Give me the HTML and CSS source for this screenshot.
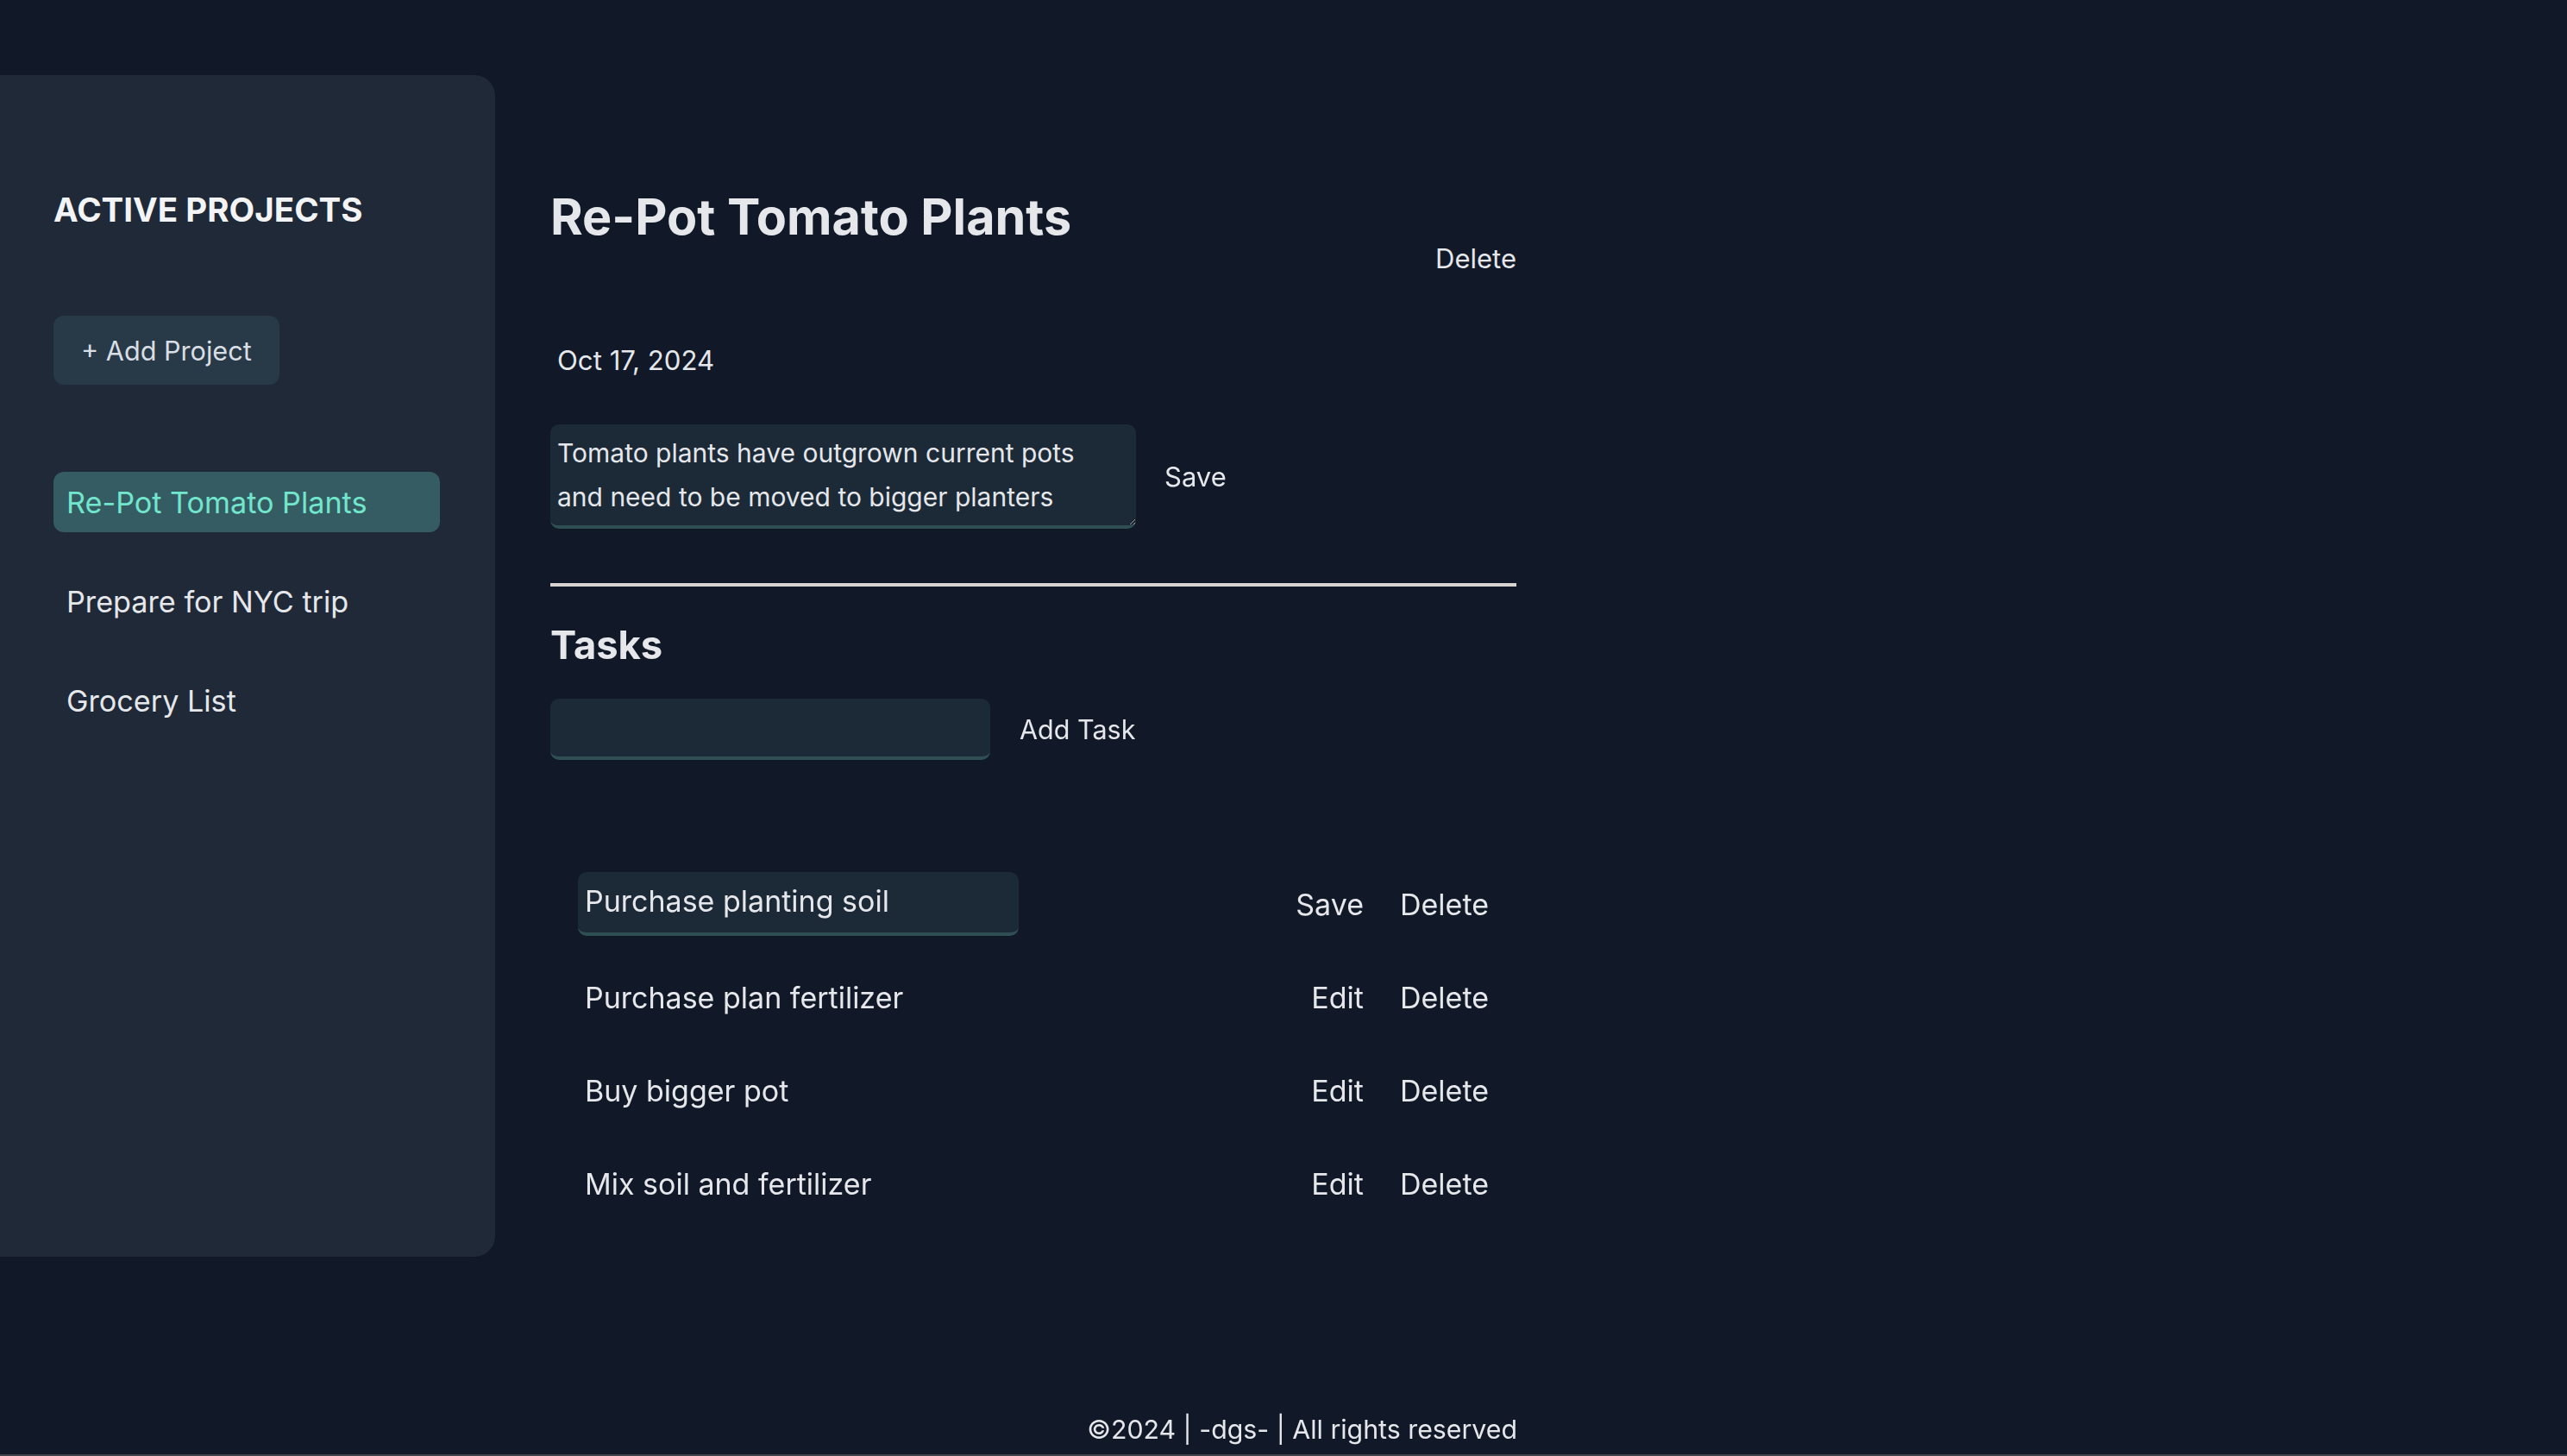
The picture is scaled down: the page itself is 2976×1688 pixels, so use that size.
FILE: index.html
```html
<!DOCTYPE html>
<html lang="en">
<head>
<meta charset="utf-8">
<title>Project Manager</title>
<link rel="stylesheet" href="styles.css">
</head>
<body>
<div class="app">
  <main class="layout">
    <aside class="sidebar">
      <h2 class="sidebar-title">ACTIVE PROJECTS</h2>
      <button class="add-project">+ Add Project</button>
      <ul class="project-list">
        <li><button class="project-item active">Re-Pot Tomato Plants</button></li>
        <li><button class="project-item">Prepare for NYC trip</button></li>
        <li><button class="project-item">Grocery List</button></li>
      </ul>
    </aside>
    <section class="project">
      <header class="project-header">
        <div class="title-row">
          <h1 class="project-title">Re-Pot Tomato Plants</h1>
          <button class="text-btn delete-project">Delete</button>
        </div>
        <p class="project-date">Oct 17, 2024</p>
        <div class="desc-row">
          <textarea class="desc-input">Tomato plants have outgrown current pots and need to be moved to bigger planters</textarea>
          <button class="text-btn">Save</button>
        </div>
      </header>
      <h2 class="tasks-title">Tasks</h2>
      <div class="new-task">
        <input class="task-input" type="text">
        <button class="text-btn">Add Task</button>
      </div>
      <ul class="task-list">
        <li class="task">
          <input class="task-edit" type="text" value="Purchase planting soil">
          <div class="task-actions"><button class="task-btn">Save</button><button class="task-btn">Delete</button></div>
        </li>
        <li class="task">
          <span class="task-text">Purchase plan fertilizer</span>
          <div class="task-actions"><button class="task-btn">Edit</button><button class="task-btn">Delete</button></div>
        </li>
        <li class="task">
          <span class="task-text">Buy bigger pot</span>
          <div class="task-actions"><button class="task-btn">Edit</button><button class="task-btn">Delete</button></div>
        </li>
        <li class="task">
          <span class="task-text">Mix soil and fertilizer</span>
          <div class="task-actions"><button class="task-btn">Edit</button><button class="task-btn">Delete</button></div>
        </li>
      </ul>
    </section>
  </main>
  <footer class="footer">©2024 | -dgs- | All rights reserved</footer>
</div>
</body>
</html>
```

FILE: styles.css
```css
html {
  background: #3f434c;
}
body {
  margin: 0;
  height: 1686px;
  background: #111827;
  color: #e5e7eb;
  font-family: Inter, "Noto Sans", sans-serif;
  overflow: hidden;
}
button, input, textarea {
  font-family: inherit;
  color: inherit;
}
.app {
  display: flex;
  flex-direction: column;
  height: 100%;
}
.layout {
  flex: 1;
  display: flex;
  align-items: flex-start;
  gap: 64px;
  padding-top: 87px;
}
.sidebar {
  box-sizing: border-box;
  width: 574px;
  height: 1370px;
  padding: 128px 64px 128px 62px;
  background: #1f2937;
  border-radius: 0 24px 24px 0;
}
.sidebar-title {
  margin: 0 0 95px;
  font-size: 38.5px;
  line-height: 56px;
  font-weight: 700;
  color: #f3f4f6;
}
.add-project {
  height: 80px;
  padding: 0 32px;
  border: none;
  border-radius: 12px;
  background: #283947;
  color: #d9dee4;
  font-size: 30.6px;
}
.project-list {
  list-style: none;
  margin: 101px 0 0;
  padding: 0;
  display: flex;
  flex-direction: column;
  gap: 45px;
}
.project-item {
  width: 100%;
  height: 70px;
  padding: 0 15px;
  border: none;
  border-radius: 12px;
  background: transparent;
  color: #e5e7eb;
  font-size: 34.2px;
  text-align: left;
}
.project-item.active {
  background: #355c63;
  color: #72e6cc;
}
.project {
  width: 1120px;
  margin-top: 128px;
}
.project-header {
  padding-bottom: 63px;
  border-bottom: 4px solid #d6d3d1;
}
.title-row {
  display: flex;
  justify-content: space-between;
  align-items: flex-start;
}
.project-title {
  margin: 0;
  font-size: 57.5px;
  line-height: 72px;
  font-weight: 700;
  color: #e5e7eb;
}
.text-btn {
  padding: 0;
  border: none;
  background: none;
  font-size: 31px;
  line-height: 48px;
  color: #e5e7eb;
}
.delete-project {
  margin-top: 61px;
}
.project-date {
  margin: 70px 0 0;
  padding-left: 8px;
  font-size: 31.2px;
  line-height: 48px;
  color: #e5e7eb;
}
.desc-row {
  display: flex;
  align-items: center;
  gap: 33px;
  margin-top: 50px;
}
.desc-input {
  box-sizing: border-box;
  width: 679px;
  height: 121px;
  padding: 8px 30px 8px 8px;
  border: none;
  border-bottom: 4px solid #2f4f55;
  border-radius: 10px;
  background: #1c2a38;
  color: #e5e7eb;
  font-size: 30px;
  line-height: 51px;
  color-scheme: dark;
  outline: none;
  resize: both;
}
.tasks-title {
  margin: 36px 0 0;
  font-size: 45.3px;
  line-height: 64px;
  font-weight: 700;
  color: #e5e7eb;
}
.new-task {
  display: flex;
  align-items: center;
  gap: 34px;
  margin-top: 30px;
}
.new-task .text-btn {
  font-size: 30.5px;
}
.task-input {
  box-sizing: border-box;
  width: 510px;
  height: 71px;
  border: none;
  border-bottom: 4px solid #2f4f55;
  border-radius: 10px;
  background: #1c2a38;
  outline: none;
}
.task-list {
  list-style: none;
  margin: 64px 0 0;
  padding: 32px;
}
.task {
  display: flex;
  justify-content: space-between;
  align-items: center;
  height: 74px;
  margin: 34px 0;
  font-size: 34px;
}
.task-text {
  padding-left: 8px;
}
.task-edit {
  box-sizing: border-box;
  width: 511px;
  height: 74px;
  padding: 0 8px 4px;
  border: none;
  border-bottom: 4px solid #2f4f55;
  border-radius: 10px;
  background: #1c2a38;
  font-size: 34px;
  color: #e5e7eb;
  outline: none;
}
.task-actions {
  display: flex;
  gap: 42px;
}
.task-btn {
  padding: 0;
  border: none;
  background: none;
  font-size: 34px;
  color: #e5e7eb;
}
.footer {
  width: 1759px;
  margin-bottom: 7px;
  text-align: right;
  font-size: 30.3px;
  line-height: 44px;
  color: #e5e7eb;
}
```
